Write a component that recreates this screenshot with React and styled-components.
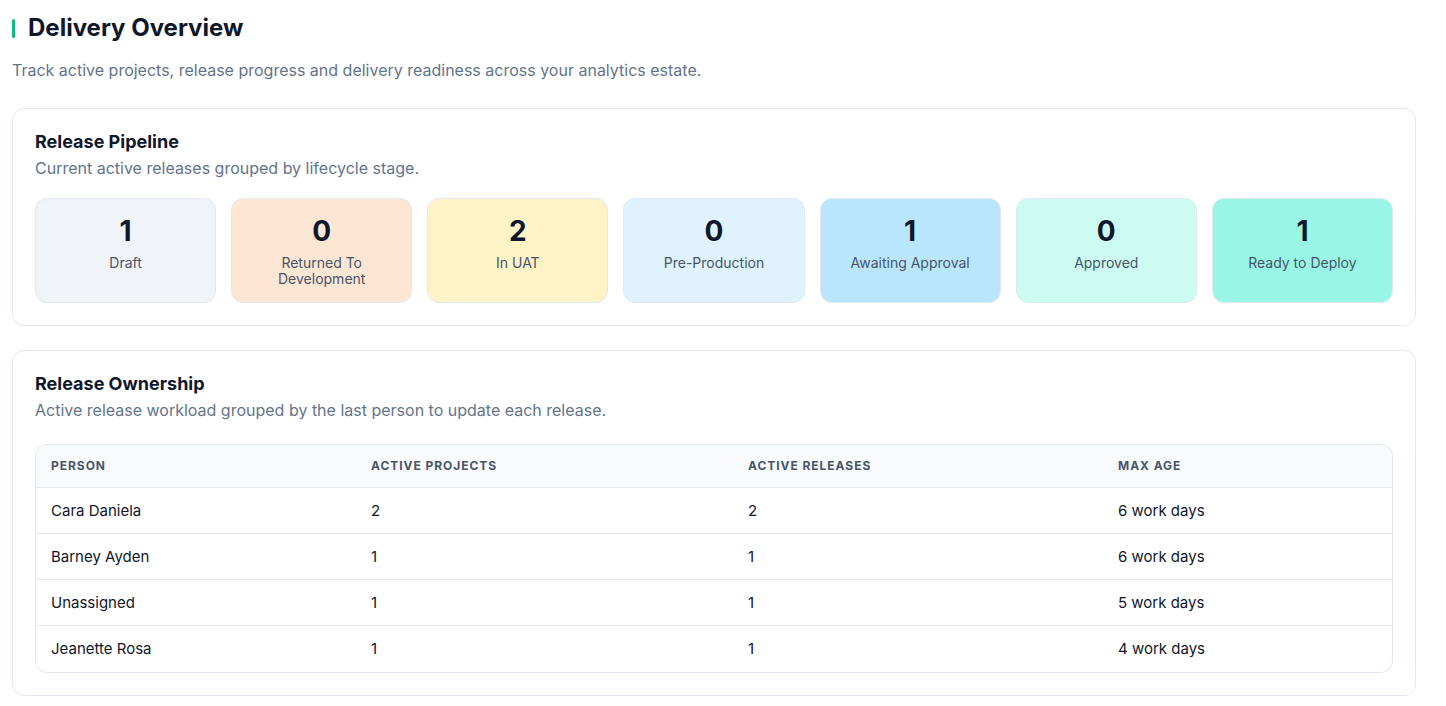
import React from 'react'
import styled, { createGlobalStyle } from 'styled-components'

const GlobalStyle = createGlobalStyle`
  * { box-sizing: border-box; }
  body {
    margin: 0;
    background: #ffffff;
    font-family: Inter, "Liberation Sans", sans-serif;
    color: #0f172a;
  }
`

const Page = styled.main`
  padding: 12px 30px 12px 12px;
  display: flex;
  flex-direction: column;
`

const PageTitle = styled.h1`
  margin: 2px 0 0;
  font-size: 24px;
  font-weight: 700;
  line-height: 28px;
  display: flex;
  align-items: center;
  gap: 13px;
  &::before {
    content: '';
    width: 3px;
    height: 19px;
    border-radius: 2px;
    background: #10b981;
  }
`

const PageSub = styled.p`
  margin: 16px 0 26px;
  font-size: 16px;
  line-height: 24px;
  color: #64748b;
`

const Card = styled.section`
  border: 1px solid #e2e8f0;
  border-radius: 12px;
  padding: 22px;
  margin-bottom: 24px;
`

const CardTitle = styled.h2`
  margin: 0;
  font-size: 18px;
  font-weight: 700;
  line-height: 22px;
`

const CardSub = styled.p`
  margin: 4px 0 ${p => p.$gap || 19}px;
  font-size: 16px;
  line-height: 22px;
  color: #64748b;
`

const Tiles = styled.div`
  display: grid;
  grid-template-columns: repeat(7, 1fr);
  gap: 15px;
`

const Tile = styled.div`
  height: 105px;
  border: 1px solid #e2e8f0;
  border-radius: 12px;
  background: ${p => p.$bg};
  display: flex;
  flex-direction: column;
  align-items: center;
  padding-top: 15px;
  text-align: center;
`

const TileNum = styled.div`
  font-size: 28px;
  font-weight: 700;
  line-height: 34px;
  color: #0f172a;
`

const TileLabel = styled.div`
  margin-top: 7px;
  font-size: 14px;
  line-height: 16px;
  color: #475569;
  padding: 0 10px;
`

const TableWrap = styled.div`
  border: 1px solid #e2e8f0;
  border-radius: 12px;
  overflow: hidden;
`

const Table = styled.table`
  width: 100%;
  border-collapse: collapse;
  table-layout: fixed;
`

const Th = styled.th`
  text-align: left;
  height: 42px;
  padding: 0 15px;
  background: #f8fafc;
  font-size: 12px;
  font-weight: 700;
  letter-spacing: 0.08em;
  text-transform: uppercase;
  color: #475569;
  border-bottom: 1px solid #e2e8f0;
  width: ${p => p.$w || 'auto'};
`

const Td = styled.td`
  height: 46px;
  padding: 0 15px;
  font-size: 15px;
  color: #0f172a;
  border-bottom: 1px solid #e2e8f0;
  tr:last-child & {
    border-bottom: none;
    height: 47px;
  }
`

const stages = [
  { n: 1, label: 'Draft', bg: '#f0f4f9' },
  { n: 0, label: 'Returned To Development', bg: '#fee6d4' },
  { n: 2, label: 'In UAT', bg: '#fef3c7' },
  { n: 0, label: 'Pre-Production', bg: '#e0f2fe' },
  { n: 1, label: 'Awaiting Approval', bg: '#bae6fd' },
  { n: 0, label: 'Approved', bg: '#ccfbf1' },
  { n: 1, label: 'Ready to Deploy', bg: '#99f6e4' },
]

const owners = [
  ['Cara Daniela', 2, 2, '6 work days'],
  ['Barney Ayden', 1, 1, '6 work days'],
  ['Unassigned', 1, 1, '5 work days'],
  ['Jeanette Rosa', 1, 1, '4 work days'],
]

export default function App() {
  return (
    <>
      <GlobalStyle />
      <Page>
        <PageTitle>Delivery Overview</PageTitle>
        <PageSub>Track active projects, release progress and delivery readiness across your analytics estate.</PageSub>

        <Card>
          <CardTitle>Release Pipeline</CardTitle>
          <CardSub>Current active releases grouped by lifecycle stage.</CardSub>
          <Tiles>
            {stages.map(s => (
              <Tile key={s.label} $bg={s.bg}>
                <TileNum>{s.n}</TileNum>
                <TileLabel>{s.label}</TileLabel>
              </Tile>
            ))}
          </Tiles>
        </Card>

        <Card>
          <CardTitle>Release Ownership</CardTitle>
          <CardSub $gap={23}>Active release workload grouped by the last person to update each release.</CardSub>
          <TableWrap>
            <Table>
              <thead>
                <tr>
                  <Th $w="320px">Person</Th>
                  <Th $w="377px">Active Projects</Th>
                  <Th $w="370px">Active Releases</Th>
                  <Th>Max Age</Th>
                </tr>
              </thead>
              <tbody>
                {owners.map(o => (
                  <tr key={o[0]}>
                    <Td>{o[0]}</Td>
                    <Td>{o[1]}</Td>
                    <Td>{o[2]}</Td>
                    <Td>{o[3]}</Td>
                  </tr>
                ))}
              </tbody>
            </Table>
          </TableWrap>
        </Card>
      </Page>
    </>
  )
}
